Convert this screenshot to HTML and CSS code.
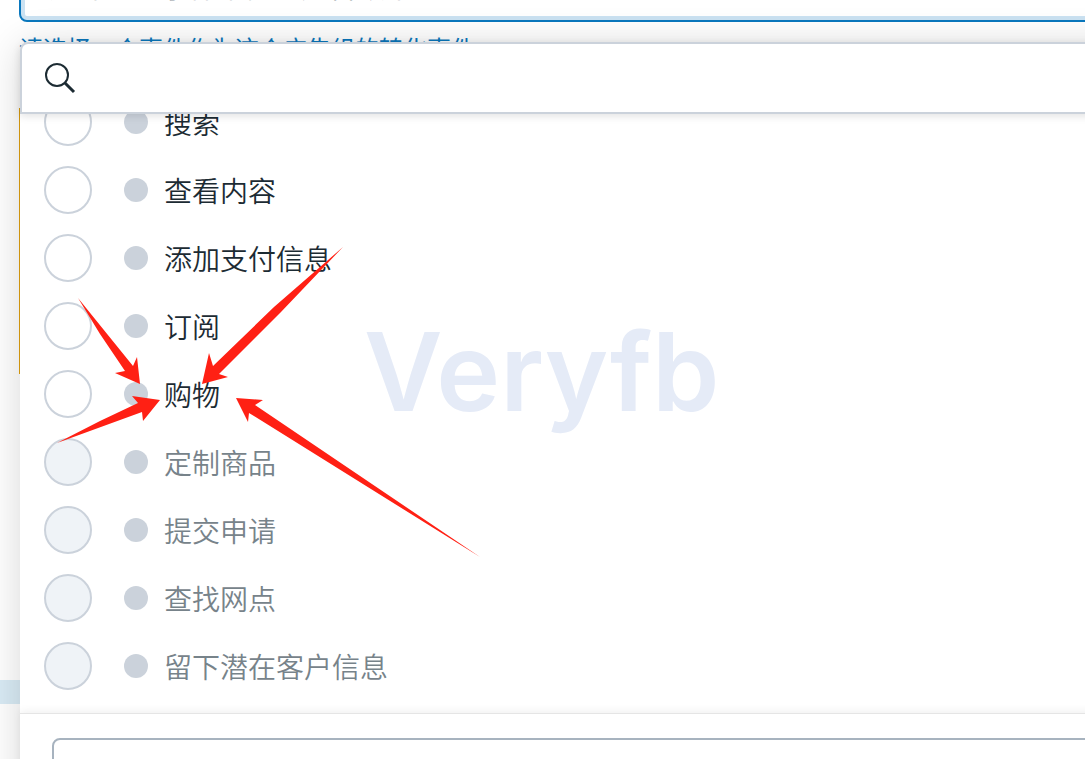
FILE: index.html
```html
<!DOCTYPE html>
<html lang="zh-CN">
<head>
    <meta charset="utf-8">
    <title>转化事件</title>
    <link rel="stylesheet" href="styles.css">
</head>
<body>
    <div class="field">
        <input class="event-input" type="text" id="event" value="选择一个事件来衡量广告效果">
        <label class="hint" for="event">请选择一个事件作为这个广告组的转化事件</label>
    </div>
    <div class="warning-edge"></div>
    <div class="selected-row"></div>

    <div class="dropdown">
        <div class="search">
            <label for="search">
                <svg class="search-icon" viewBox="0 0 32 32" role="img" aria-label="搜索">
                    <circle cx="13" cy="13" r="11"/>
                    <path class="handle" d="M21 21L30 30"/>
                </svg>
            </label>
            <input type="text" id="search">
        </div>
        <div class="list">
            <label class="option"><input type="radio" name="option"><span class="dot"></span>搜索</label>
            <label class="option"><input type="radio" name="option"><span class="dot"></span>查看内容</label>
            <label class="option"><input type="radio" name="option"><span class="dot"></span>添加支付信息</label>
            <label class="option"><input type="radio" name="option"><span class="dot"></span>订阅</label>
            <label class="option"><input type="radio" name="option"><span class="dot"></span>购物</label>
            <label class="option off"><input type="radio" name="option" disabled><span class="dot"></span>定制商品</label>
            <label class="option off"><input type="radio" name="option" disabled><span class="dot"></span>提交申请</label>
            <label class="option off"><input type="radio" name="option" disabled><span class="dot"></span>查找网点</label>
            <label class="option off"><input type="radio" name="option" disabled><span class="dot"></span>留下潜在客户信息</label>
        </div>
        <div class="footer">
            <button class="footer-btn" type="button"></button>
        </div>
    </div>

    <div class="watermark">Veryfb</div>
    <svg class="arrows" width="500" height="570" viewBox="0 0 500 570">
        <path d="M78 298L133 366L137 357L140 384L115 373L125 371L100 334Z"/>
        <path d="M343 247L274 307L213 366L209 353L202 384L228 377L219 374L281 312Z"/>
        <path d="M57 443L100 421L138 403L132 396L160 400L143 421L142 412Z"/>
        <path d="M236 398L263 400L255 405L480 557L249 413L248 422Z"/>
    </svg>
</body>
</html>
```
FILE: styles.css
```css
* {
    box-sizing: border-box;
}
body {
    margin: 0;
    min-height: 100vh;
    overflow: hidden;
    background: #fff;
    font-family: "Noto Sans CJK SC", "Noto Sans", sans-serif;
    font-weight: 350;
    color: #1c2b33;
}
input {
    font: inherit;
    color: inherit;
}

/* page behind the menu */
.field {
    margin-left: 19px;
    margin-top: -58px;
    margin-right: -20px;
}
.event-input {
    display: block;
    width: 100%;
    height: 80px;
    padding: 8px 28px 0;
    border: 2px solid #0a78be;
    border-radius: 8px;
    box-shadow: inset 0 0 0 4px #cbe2f2;
    font-size: 28px;
    color: #8a9298;
    outline: none;
}
.hint {
    display: block;
    margin-top: 8px;
    font-size: 24px;
    font-weight: 400;
    line-height: 36px;
    color: #0a78be;
}
.warning-edge {
    position: absolute;
    left: 19px;
    top: 108px;
    width: 10px;
    height: 266px;
    background: #e0a010;
}
.selected-row {
    position: absolute;
    left: 0;
    top: 680px;
    width: 40px;
    height: 24px;
    background: #d9ebf5;
}

/* menu */
.dropdown {
    position: absolute;
    left: 20px;
    right: -60px;
    top: 42px;
    background: #fff;
    border-radius: 8px;
    box-shadow: 0 4px 40px rgba(0, 0, 0, 0.16);
}
.search {
    position: relative;
    display: flex;
    align-items: center;
    gap: 16px;
    height: 72px;
    padding: 0 22px;
    border: 2px solid #cbd2db;
    border-radius: 8px 8px 0 0;
    box-shadow: 0 2px 8px rgba(0, 0, 0, 0.12);
    background: #fff;
}
.search label {
    display: flex;
}
.search input {
    flex: 1;
    height: 60px;
    border: none;
    outline: none;
    font-size: 28px;
}
.search-icon {
    width: 32px;
    height: 32px;
    fill: none;
    stroke: #1c2b33;
    stroke-width: 2;
}
.search-icon .handle {
    stroke-width: 3;
}
.list {
    display: flex;
    flex-direction: column;
    justify-content: flex-end;
    height: 599px;
    padding-bottom: 13px;
    overflow: hidden;
}
.option {
    display: flex;
    flex: none;
    align-items: center;
    height: 68px;
    padding-left: 24px;
    font-size: 28px;
    line-height: 40px;
}
.option input {
    appearance: none;
    width: 48px;
    height: 48px;
    margin: 0 32px 0 0;
    border: 2px solid #cbd2db;
    border-radius: 50%;
    background: #fff;
}
.dot {
    width: 24px;
    height: 24px;
    margin-right: 16px;
    border-radius: 50%;
    background: #cbd2db;
}
.off {
    color: #77838a;
}
.off input {
    background: #eff3f7;
}
.footer {
    padding: 24px 32px;
    border-top: 1px solid #e5e5e5;
    box-shadow: 0 -2px 8px rgba(0, 0, 0, 0.06);
}
.footer-btn {
    display: block;
    width: 100%;
    height: 72px;
    border: 2px solid #a7b3bf;
    border-radius: 8px;
    background: #fff;
}

/* marks over the menu */
.watermark {
    position: absolute;
    left: 364px;
    top: 312px;
    font-family: Inter, sans-serif;
    font-size: 108px;
    font-weight: 600;
    line-height: 120px;
    color: #e5ebf7;
    pointer-events: none;
}
.arrows {
    position: absolute;
    left: 0;
    top: 0;
    fill: #ff2014;
    pointer-events: none;
}
```
